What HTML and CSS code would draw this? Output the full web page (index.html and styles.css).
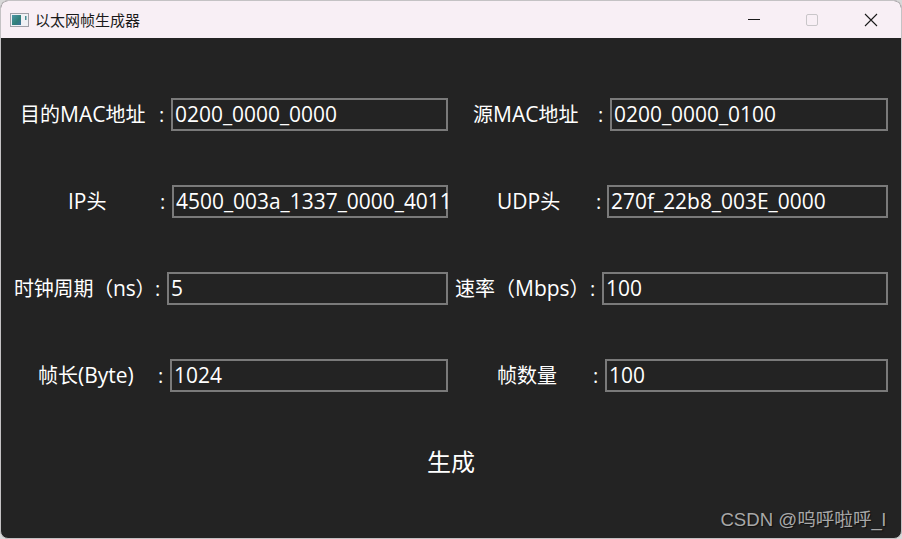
FILE: index.html
```html
<!DOCTYPE html>
<html lang="zh-CN">
<head>
<meta charset="utf-8">
<title>以太网帧生成器</title>
<link rel="stylesheet" href="styles.css">
</head>
<body>
<div class="window">
  <header class="titlebar">
    <svg class="app-icon" width="19" height="14" viewBox="0 0 19 14">
      <defs><linearGradient id="g" x1="0" y1="0" x2="1" y2="1"><stop offset="0" stop-color="#4f97a8"/><stop offset="0.6" stop-color="#2f7f78"/><stop offset="1" stop-color="#3f6f9f"/></linearGradient></defs>
      <rect x="0.5" y="0.5" width="18" height="13" fill="#f0f1f5" stroke="#a0a0a8"/>
      <rect x="2" y="2" width="9" height="10" fill="url(#g)"/>
      <rect x="15" y="3" width="1.5" height="4" fill="#4a8f95"/>
    </svg>
    <span class="title">以太网帧生成器</span>
    <div class="controls">
      <svg class="ctl" width="58" height="38" viewBox="0 0 58 38"><path d="M22 18.5H34" stroke="#1a1a1a" stroke-width="1"/></svg>
      <svg class="ctl" width="58" height="38" viewBox="0 0 58 38"><rect x="22.5" y="13.5" width="11" height="11" rx="1.5" fill="none" stroke="#c9c6c9"/></svg>
      <svg class="ctl" width="58" height="38" viewBox="0 0 58 38"><path d="M23 13L35 25M35 13L23 25" stroke="#1a1a1a" stroke-width="1.1"/></svg>
    </div>
  </header>
  <main class="form">
    <div class="row">
      <div class="field left a"><span class="label">目的<span class="latin">MAC</span>地址</span><span class="colon">:</span><div class="box">0200_0000_0000</div></div>
      <div class="field right e"><span class="label">源<span class="latin">MAC</span>地址</span><span class="colon">:</span><div class="box">0200_0000_0100</div></div>
    </div>
    <div class="row">
      <div class="field left b"><span class="label"><span class="latin">IP</span>头</span><span class="colon">:</span><div class="box">4500_003a_1337_0000_4011</div></div>
      <div class="field right f"><span class="label"><span class="latin">UDP</span>头</span><span class="colon">:</span><div class="box">270f_22b8_003E_0000</div></div>
    </div>
    <div class="row">
      <div class="field left c"><span class="label">时钟周期（<span class="latin">ns</span>）</span><span class="colon">:</span><div class="box">5</div></div>
      <div class="field right g"><span class="label">速率（<span class="latin">Mbps</span>）</span><span class="colon">:</span><div class="box">100</div></div>
    </div>
    <div class="row">
      <div class="field left d"><span class="label">帧长<span class="latin">(Byte)</span></span><span class="colon">:</span><div class="box">1024</div></div>
      <div class="field right h"><span class="label">帧数量</span><span class="colon">:</span><div class="box">100</div></div>
    </div>
    <div class="action">生成</div>
  </main>
  <div class="watermark">CSDN @呜呼啦呼_l</div>
</div>
</body>
</html>
```
FILE: styles.css
```css
* { box-sizing: border-box; }
html, body { margin: 0; height: 100%; background: #d8d8d8; }
body { overflow: hidden; font-family: "Open Sans", "Noto Sans CJK SC", sans-serif; }
.window {
  position: relative;
  width: 902px;
  height: 539px;
  display: flex;
  flex-direction: column;
  border: 1px solid #c4c2c4;
  border-radius: 8px;
  overflow: hidden;
  background: #232323;
}
.titlebar {
  flex: none;
  height: 37px;
  display: flex;
  align-items: center;
  background: #f8eff5;
  padding-left: 9px;
}
.app-icon { flex: none; margin-right: 6px; }
.title { font-size: 15px; color: #1a1a1a; font-family: "Noto Sans CJK SC", sans-serif; }
.controls { margin-left: auto; display: flex; margin-right: 1px; }
.ctl { display: block; }
.form {
  flex: 1;
  display: flex;
  flex-direction: column;
  gap: 54px;
  padding: 60px 13px 0 0;
}
.row { display: flex; height: 33px; }
.field { display: flex; align-items: center; color: #fff; font-size: 20px; }
.field.left { width: 447px; }
.field.right { margin-left: 7px; flex: 1; }
.label { flex: none; white-space: pre; line-height: 33px; }
.latin { font-size: 21px; }
.colon { flex: none; width: 5px; text-align: center; }
.box {
  flex: 1;
  min-width: 0;
  height: 33px;
  border: 2px solid #7a7a7a;
  padding-left: 2px;
  font-size: 20.95px;
  line-height: 29px;
  white-space: nowrap;
  color: #fff;
}
.a .label { margin-left: 19px; width: 128px; } .a .colon { margin-left: 11px; margin-right: 7px; }
.b .label { margin-left: 67px; width: 40px; } .b .colon { margin-left: 52px; margin-right: 7px; }
.c .label { margin-left: 13px; width: 141px; letter-spacing: -0.2px; } .c .colon { margin-left: 0; margin-right: 7px; }
.d .label { margin-left: 37px; width: 96px; } .d .colon { margin-left: 24px; margin-right: 7px; }
.e .label { margin-left: 18px; width: 108px; } .e .colon { margin-left: 17px; margin-right: 7px; }
.f .label { margin-left: 42px; width: 61px; } .f .colon { margin-left: 38px; margin-right: 6px; }
.g .label { margin-left: 0; width: 135px; } .g .colon { margin-left: 0; margin-right: 7px; }
.h .label { margin-left: 42px; width: 60px; } .h .colon { margin-left: 36px; margin-right: 7px; }
.action {
  text-align: center;
  color: #fff;
  font-size: 24px;
  line-height: 29px;
  font-family: "Noto Sans CJK SC", sans-serif;
  margin-left: 13px;
}
.watermark {
  position: absolute;
  right: 15px;
  bottom: 7px;
  font-family: "Liberation Sans", "Noto Sans CJK SC", sans-serif;
  font-size: 18.6px;
  line-height: 22px;
  color: #a8a8a8;
  text-shadow: 1px 1px 1px #111;
}
```
